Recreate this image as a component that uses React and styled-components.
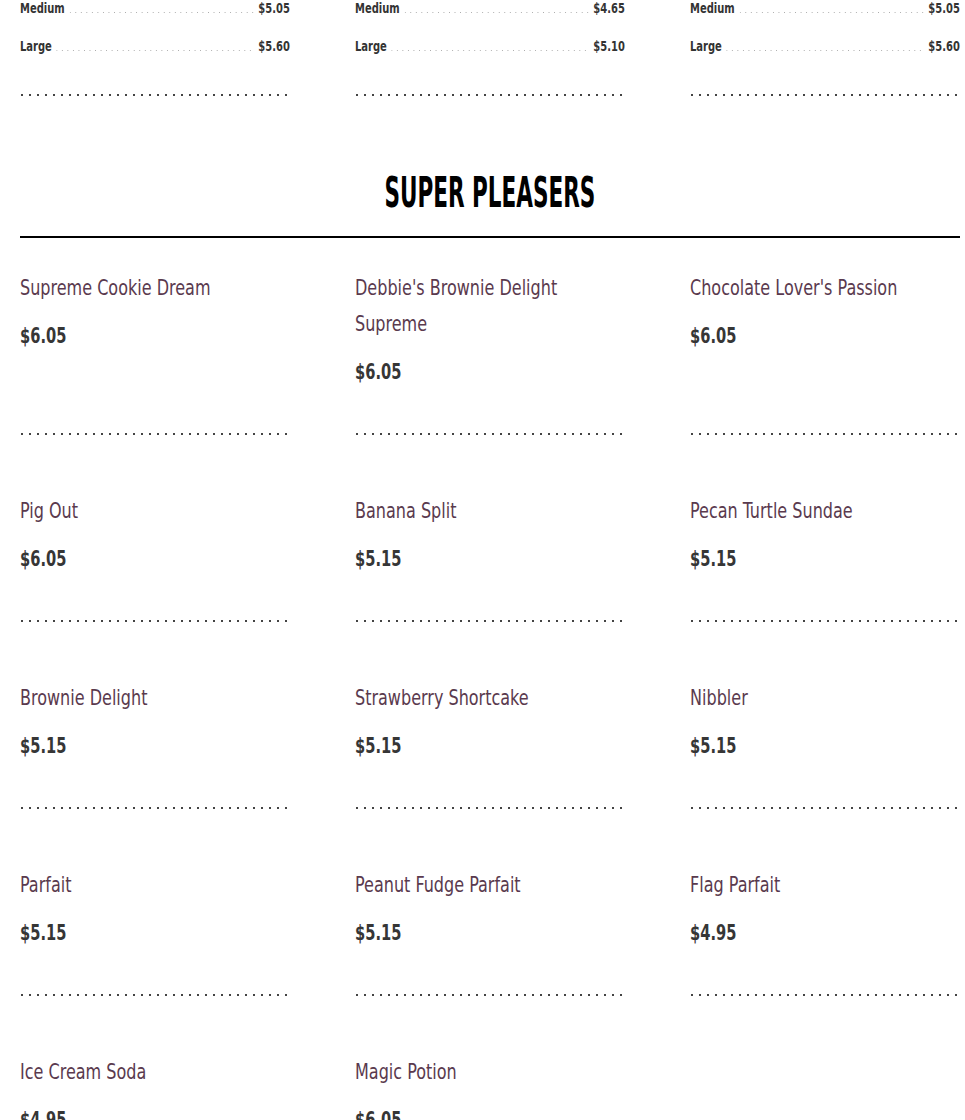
import React from 'react';
import styled, { createGlobalStyle } from 'styled-components';

const GlobalStyle = createGlobalStyle`
    body {
        margin: 0;
        background: #fff;
        font-family: "DejaVu Sans Condensed", "DejaVu Sans", sans-serif;
    }
`;

const Page = styled.div`
    padding: 0 5px 0 20px;
    width: 940px;
`;

const Grid = styled.div`
    display: grid;
    grid-template-columns: repeat(3, 270px);
    column-gap: 65px;
    row-gap: ${props => props.rowGap || 0}px;
`;

const Dots = styled.div`
    height: 2px;
    margin-top: ${props => props.top || 0}px;
    background-image: linear-gradient(to right, #444 2px, transparent 2px);
    background-size: 8px 2px;
    background-position: 1px 0;
`;

const SizeList = styled.div`
    display: flex;
    flex-direction: column;
    gap: 22px;
`;

// narrow face: text is drawn wide and squeezed to the column
const SizeRow = styled.div`
    display: flex;
    align-items: baseline;
    width: 126.5%;
    transform: scaleX(0.79);
    transform-origin: left center;
    font-size: 14px;
    line-height: 16px;
    font-weight: bold;
    color: #333;
`;

const Leader = styled.span`
    flex: 1;
    margin: 0 6px;
    height: 1px;
    background-image: linear-gradient(to right, #aaa 1px, transparent 1px);
    background-size: 7px 1px;
`;

const Heading = styled.h2`
    margin: 0 0 32px;
    padding: 73px 0 19px;
    text-align: center;
    font-size: 42px;
    line-height: 48px;
    font-weight: bold;
    color: #000;
    border-bottom: 2px solid #000;
`;

const HeadingText = styled.span`
    display: inline-block;
    transform: scaleX(0.57);
`;

const Item = styled.div`
    display: flex;
    flex-direction: column;
`;

const Name = styled.div`
    width: 123.5%;
    transform: scaleX(0.81);
    transform-origin: left center;
    font-size: 22px;
    line-height: 36px;
    color: #5a3a4e;
`;

const Price = styled.div`
    width: 135%;
    transform: scaleX(0.74);
    transform-origin: left center;
    font-size: 22px;
    line-height: 36px;
    margin-top: 12px;
    font-weight: bold;
    color: #363636;
`;

const Bottom = styled(Dots)`
    margin-top: auto;
`;

const Spacer = styled.div`
    height: 43px;
    flex-shrink: 0;
`;

const sizes = [
    [['Medium', '$5.05'], ['Large', '$5.60']],
    [['Medium', '$4.65'], ['Large', '$5.10']],
    [['Medium', '$5.05'], ['Large', '$5.60']]
];

const items = [
    ['Supreme Cookie Dream', '$6.05'],
    ["Debbie's Brownie Delight Supreme", '$6.05'],
    ["Chocolate Lover's Passion", '$6.05'],
    ['Pig Out', '$6.05'],
    ['Banana Split', '$5.15'],
    ['Pecan Turtle Sundae', '$5.15'],
    ['Brownie Delight', '$5.15'],
    ['Strawberry Shortcake', '$5.15'],
    ['Nibbler', '$5.15'],
    ['Parfait', '$5.15'],
    ['Peanut Fudge Parfait', '$5.15'],
    ['Flag Parfait', '$4.95'],
    ['Ice Cream Soda', '$4.95'],
    ['Magic Potion', '$6.05']
];

const App = () => (
    <Page>
        <GlobalStyle />
        <Grid>
            {sizes.map((col, i) => (
                <div key={i}>
                    <SizeList>
                        {col.map(([label, price]) => (
                            <SizeRow key={label}>
                                <span>{label}</span>
                                <Leader />
                                <span>{price}</span>
                            </SizeRow>
                        ))}
                    </SizeList>
                    <Dots top={40} />
                </div>
            ))}
        </Grid>
        <Heading>
            <HeadingText>SUPER PLEASERS</HeadingText>
        </Heading>
        <Grid rowGap={58}>
            {items.map(([name, price]) => (
                <Item key={name}>
                    <Name>{name}</Name>
                    <Price>{price}</Price>
                    <Spacer />
                    <Bottom />
                </Item>
            ))}
        </Grid>
    </Page>
);

export default App;
